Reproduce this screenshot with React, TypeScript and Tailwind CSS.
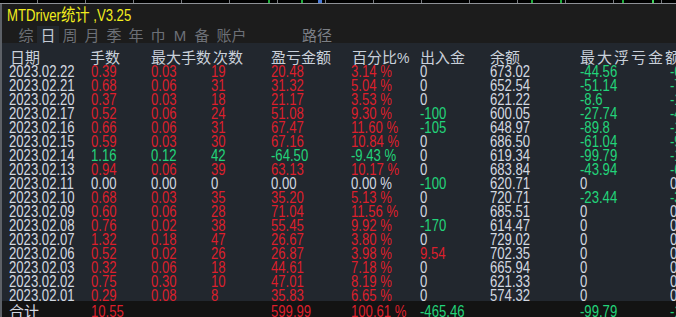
import React from 'react';

type Row = { d: string; v: string[]; loss?: boolean };

const rows: Row[] = [
    { d: '2023.02.22', v: ['0.39', '0.03', '19', '20.48', '3.14 %', '0', '673.02', '-44.56', '-6'] },
    { d: '2023.02.21', v: ['0.68', '0.06', '31', '31.32', '5.04 %', '0', '652.54', '-51.14', '-7'] },
    { d: '2023.02.20', v: ['0.37', '0.03', '18', '21.17', '3.53 %', '0', '621.22', '-8.6', '-1'] },
    { d: '2023.02.17', v: ['0.52', '0.06', '24', '51.08', '9.30 %', '-100', '600.05', '-27.74', '-4'] },
    { d: '2023.02.16', v: ['0.66', '0.06', '31', '67.47', '11.60 %', '-105', '648.97', '-89.8', '-1'] },
    { d: '2023.02.15', v: ['0.59', '0.03', '30', '67.16', '10.84 %', '0', '686.50', '-61.04', '-9'] },
    { d: '2023.02.14', v: ['1.16', '0.12', '42', '-64.50', '-9.43 %', '0', '619.34', '-99.79', '-1'], loss: true },
    { d: '2023.02.13', v: ['0.94', '0.06', '39', '63.13', '10.17 %', '0', '683.84', '-43.94', '-6'] },
    { d: '2023.02.11', v: ['0.00', '0.00', '0', '0.00', '0.00 %', '-100', '620.71', '0', '0'] },
    { d: '2023.02.10', v: ['0.68', '0.03', '35', '35.20', '5.13 %', '0', '720.71', '-23.44', '-3'] },
    { d: '2023.02.09', v: ['0.60', '0.06', '28', '71.04', '11.56 %', '0', '685.51', '0', '0'] },
    { d: '2023.02.08', v: ['0.76', '0.02', '38', '55.45', '9.92 %', '-170', '614.47', '0', '0'] },
    { d: '2023.02.07', v: ['1.32', '0.18', '47', '26.67', '3.80 %', '0', '729.02', '0', '0'] },
    { d: '2023.02.06', v: ['0.52', '0.02', '26', '26.87', '3.98 %', '9.54', '702.35', '0', '0'] },
    { d: '2023.02.03', v: ['0.32', '0.06', '18', '44.61', '7.18 %', '0', '665.94', '0', '0'] },
    { d: '2023.02.02', v: ['0.75', '0.30', '10', '47.01', '8.19 %', '0', '621.33', '0', '0'] },
    { d: '2023.02.01', v: ['0.29', '0.08', '8', '35.83', '6.65 %', '0', '574.32', '0', '0'] },
];

const total = ['10.55', '', '', '599.99', '100.61 %', '-465.46', '', '-99.79', '-1'];

const tabs = ['综', '日', '周', '月', '季', '年', '巾', 'M', '备'];

const GRID = 'grid grid-cols-[82px_60px_60px_60px_80px_69px_70px_90px_90px_100px] pl-[7px]';
// the terminal font is a narrow one; squeeze Liberation Sans to its width
const NUM = 'origin-left scale-x-[0.82]';

// colour of a value cell: balance column is always plain
function tone(v: string, i: number, loss?: boolean) {
    if (v === '') return '';
    if (i === 6) return 'text-[#d3d8e0]';
    if (parseFloat(v) === 0) return 'text-[#d3d8e0]';
    if (v.startsWith('-')) return 'text-[#22d47a]';
    if (loss && i <= 4) return 'text-[#22d47a]';
    return 'text-[#dc1f2c]';
}

const TopStrip = () => {
    const ticks = [37, 85, 133, 181, 229, 277, 325, 373, 421, 469, 517, 565, 613, 661];
    return (
        <svg width="676" height="4" className="block">
            <rect width="676" height="4" fill="#000" />
            <line x1="0" y1="3.5" x2="676" y2="3.5" stroke="#8e9196" strokeWidth="1" />
            {ticks.map((x) => (
                <line key={x} x1={x + 0.5} y1="0" x2={x + 0.5} y2="3" stroke="#7a7d82" />
            ))}
            <rect x="268" y="0" width="2" height="3" fill="#1fae3c" />
            <rect x="301" y="0" width="2" height="3" fill="#1fae3c" />
            <rect x="318" y="0" width="4" height="3" fill="#4a7bd8" />
            <rect x="531" y="0" width="2" height="3" fill="#1fae3c" />
            <rect x="560" y="0" width="2" height="3" fill="#1fae3c" />
            <rect x="622" y="0" width="2" height="3" fill="#1fae3c" />
            <rect x="652" y="0" width="2" height="3" fill="#3fd35a" />
        </svg>
    );
};

const App = () => {
    return (
        <div className="w-[676px] h-[317px] overflow-hidden bg-[#000] flex flex-col">
            <TopStrip />
            <div className="flex-1 flex flex-col border-l-2 border-[#5d6167] min-h-0">
                <div className="bg-[#1c1c1c] h-[39px] flex flex-col">
                    <div className="h-[22px] pt-[2px] pl-[5px]">
                        <div className="origin-left scale-x-[0.82] leading-[18px] text-[#f3ee1e] whitespace-nowrap font-['Liberation_Sans','Noto_Sans_CJK_SC',sans-serif]">
                            <span className="text-[16px]">MTDriver</span>
                            <span className="text-[17.5px]">统计</span>
                            <span className="text-[16px]"> ,V3.25</span>
                        </div>
                    </div>
                    <div className="h-[17px] flex items-end pl-[13px] text-[15px] leading-[15px] font-['Liberation_Sans','Noto_Sans_CJK_SC',sans-serif]">
                        {tabs.map((t, i) => (
                            <div
                                key={t}
                                className={`w-[22px] h-[17px] pt-[2px] text-center ${
                                    i === 1 ? 'bg-[#22272e] text-[#c3cad5]' : 'text-[#6c7077]'
                                }`}
                            >
                                {t}
                            </div>
                        ))}
                        <div className="w-[37px] h-[17px] pt-[2px] text-center text-[#6c7077]">账户</div>
                        <div className="h-[17px] pt-[2px] ml-[52px] text-[#7b7f86]">路径</div>
                    </div>
                </div>

                <div className="flex-1 bg-[#22272e] flex flex-col min-h-0">
                    <div
                        className={`${GRID} h-[22px] pt-[6px] text-[15px] leading-[15px] text-[#c9d0da] whitespace-nowrap font-['Noto_Sans_CJK_SC',sans-serif]`}
                    >
                        <div className="pl-px">日期</div>
                        <div className="-ml-px">手数</div>
                        <div>最大手数</div>
                        <div className="pl-[2px]">次数</div>
                        <div>盈亏金额</div>
                        <div className="pl-px">
                            百分比<span className="font-['Liberation_Sans',sans-serif] text-[14px]">%</span>
                        </div>
                        <div>出入金</div>
                        <div>余额</div>
                        <div className="tracking-[2px]">最大浮亏金额</div>
                        <div></div>
                    </div>

                    <div className="font-['Liberation_Sans',sans-serif] text-[16px] leading-[14px] whitespace-nowrap">
                        {rows.map((r) => (
                            <div key={r.d} className={`${GRID} h-[14px]`}>
                                <div className={`${NUM} text-[#d3d8e0]`}>{r.d}</div>
                                {r.v.map((v, i) => (
                                    <div key={i} className={`${NUM} ${tone(v, i, r.loss)}`}>
                                        {v}
                                    </div>
                                ))}
                            </div>
                        ))}
                    </div>

                    <div
                        className={`${GRID} -mt-[2px] flex-1 bg-[#131313] pt-[4px] border-b border-[#8a8e95] text-[16px] leading-[14px] whitespace-nowrap font-['Liberation_Sans',sans-serif]`}
                    >
                        <div className="text-[15px] text-[#d3d8e0] font-['Noto_Sans_CJK_SC',sans-serif] -mt-[1px]">合计</div>
                        {total.map((v, i) => (
                            <div key={i} className={`${NUM} ${tone(v, i)}`}>
                                {v}
                            </div>
                        ))}
                    </div>
                </div>
            </div>
        </div>
    );
};

export default App;
